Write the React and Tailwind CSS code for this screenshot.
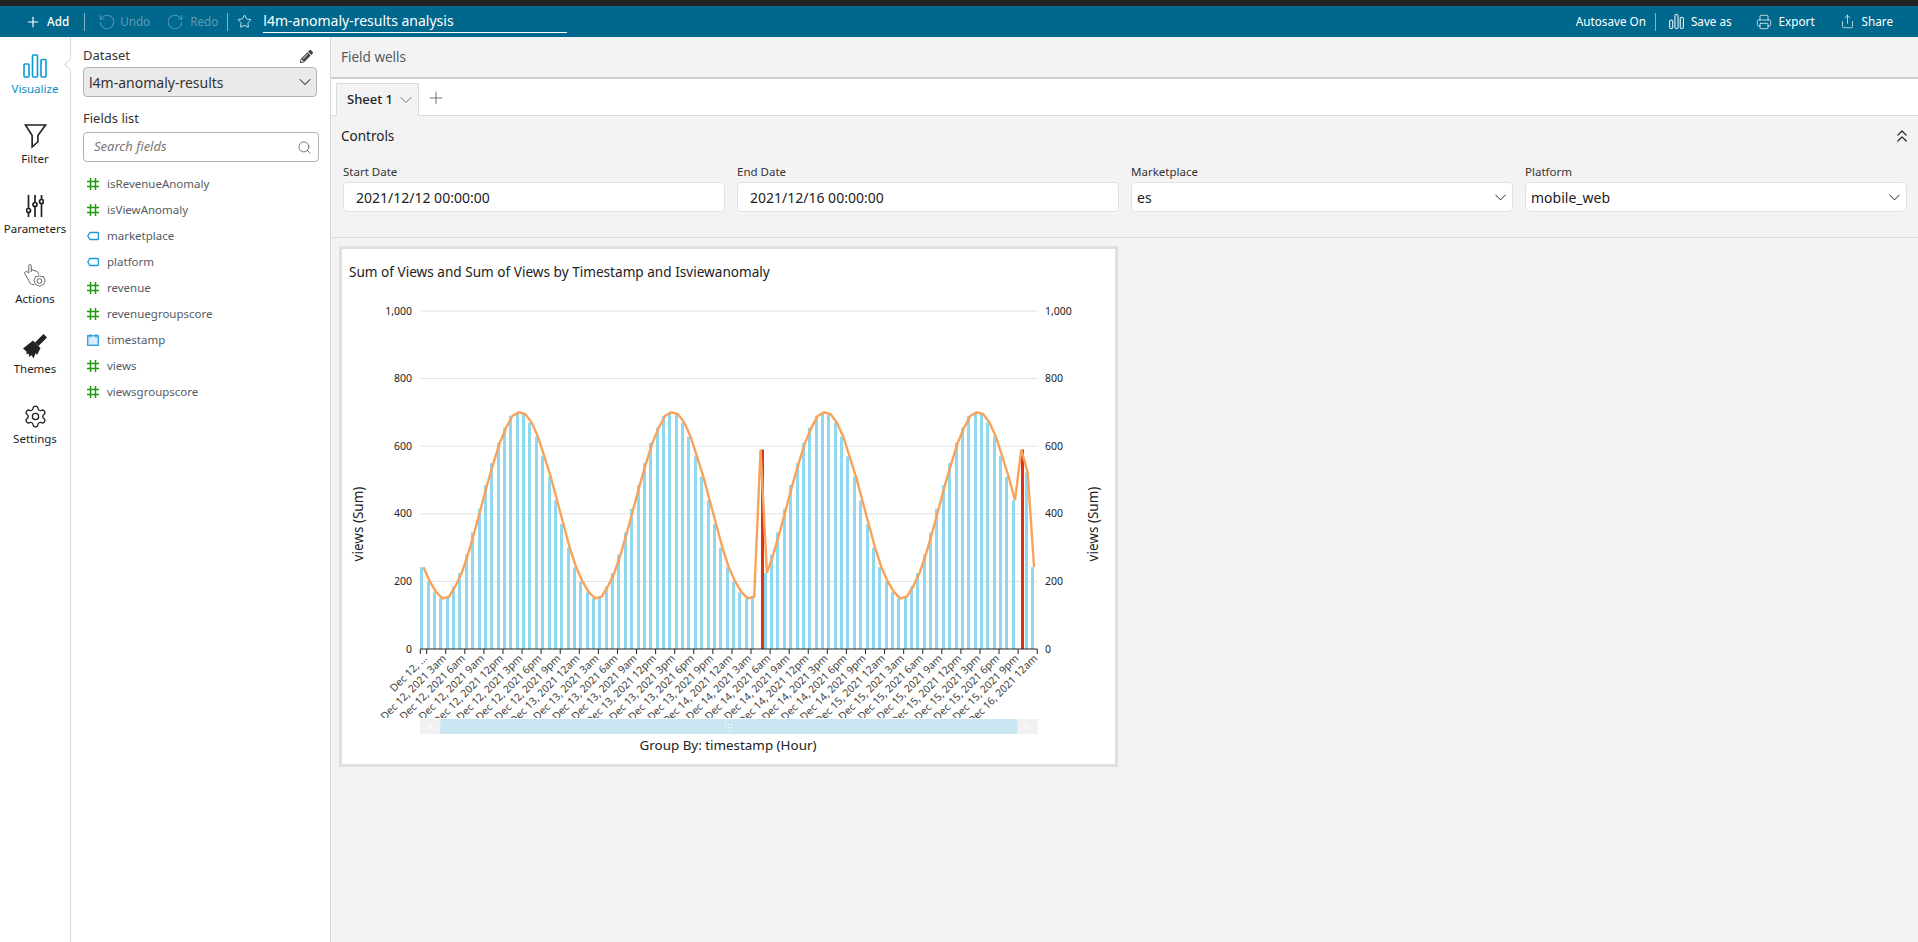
import React from "react";
import { ChevronDown, ChevronsUp, Plus, Printer, RotateCcw, RotateCw, Search, Settings, Share, Star } from "lucide-react";
import { FaPencilAlt } from "react-icons/fa";

const font = { fontFamily: '"Noto Sans", sans-serif' };

const BarsIcon = ({ className }) => (
  <svg viewBox="0 0 24 24" className={className} fill="none" stroke="currentColor" strokeWidth="1.6">
    <rect x="1" y="10" width="5" height="13" rx="1" />
    <rect x="9.5" y="1" width="5" height="22" rx="1" />
    <rect x="18" y="5.5" width="5" height="17.5" rx="1" />
  </svg>
);

const FilterIcon = () => (
  <svg viewBox="0 0 24 26" className="w-[23px] h-[26px]" fill="none" stroke="#222" strokeWidth="1.7">
    <path d="M1.5 1.5H22.5L14.5 12.5V19L8.5 24.5V12.5Z" />
  </svg>
);

const ParamsIcon = () => (
  <svg viewBox="0 0 18 24" className="w-[18px] h-[24px]" fill="none" stroke="#222" strokeWidth="1.7">
    <path d="M2.5 1V14M2.5 19V23M9 1V8M9 13V23M15.5 5V1M15.5 10V23" />
    <circle cx="2.5" cy="16.5" r="2" />
    <circle cx="9" cy="10.5" r="2" />
    <circle cx="15.5" cy="7.5" r="2" />
  </svg>
);

const ActionsIcon = () => (
  <svg viewBox="0 0 24 26" className="w-[24px] h-[26px]" fill="none" stroke="#555" strokeWidth="0.9">
    <path d="M7 1.5C6 1.5 5.8 2.2 5.8 3V10L4.5 9C3.4 8.2 1.5 8.6 1.5 10.2L5.5 17C6 18 6.5 20 8.5 21.5H11M8.3 9V3C8.3 2 7.8 1.5 7 1.5M8.3 6.5L14 8.5C15 9 15.5 10 15.5 11.5" />
    <g stroke="#555" strokeWidth="0.9">
      <circle cx="16.5" cy="18" r="2.4" />
      <path d="M16.5 12.8L18.2 13.6L20.5 13.5L21.2 15.5L22.2 17.2L21.6 19.4L20.5 21.5L18.5 22.4L16.5 23.4L14.5 22.4L12.5 21.5L11.6 19.4L11 17.2L11.8 15.5L12.6 13.5L14.8 13.6Z" />
    </g>
  </svg>
);

const BrushIcon = () => (
  <svg viewBox="0 0 24 25" className="w-[24px] h-[25px]" fill="#222">
    <path d="M20.5 0L24 3.5L15.5 12L12 8.5Z" />
    <path d="M10 6.5L17.5 14L14 21L12.6 19L10.5 24.5L8.5 21L6.5 23L5.5 19.5L3.5 20.5L3.5 17.5L0 14.5Z" />
  </svg>
);

const HashIcon = () => (
  <svg viewBox="0 0 12 12" className="w-[12px] h-[12px]" fill="none" stroke="#1d9c0f" strokeWidth="1.5">
    <path d="M3.5 0V12M8.5 0V12M0 3.5H12M0 8.5H12" />
  </svg>
);

const TagIcon = () => (
  <svg viewBox="0 0 12 12" className="w-[12px] h-[12px]" fill="none" stroke="#1a9ad6" strokeWidth="1.3">
    <path d="M3 2.5H10.3C11 2.5 11.4 3 11.4 3.6V8.4C11.4 9 11 9.5 10.3 9.5H3L0.8 6Z" />
  </svg>
);

const CalendarIcon = () => (
  <svg viewBox="0 0 12 12" className="w-[12px] h-[12px]" fill="none" stroke="#35a4e0" strokeWidth="1.4">
    <rect x="0.7" y="1.7" width="10.6" height="9.6" fill="#d7eefa" />
    <path d="M3 0V3.5M9 0V3.5" />
  </svg>
);

const railItems = [
  { label: "Visualize", icon: <BarsIcon className="w-[24px] h-[24px] text-[#0a9ad6]" />, active: true },
  { label: "Filter", icon: <FilterIcon /> },
  { label: "Parameters", icon: <ParamsIcon /> },
  { label: "Actions", icon: <ActionsIcon /> },
  { label: "Themes", icon: <BrushIcon /> },
  { label: "Settings", icon: <Settings size={25} strokeWidth={1.25} className="text-[#222]" /> },
];

const fields = [
  ["isRevenueAnomaly", "num"],
  ["isViewAnomaly", "num"],
  ["marketplace", "tag"],
  ["platform", "tag"],
  ["revenue", "num"],
  ["revenuegroupscore", "num"],
  ["timestamp", "date"],
  ["views", "num"],
  ["viewsgroupscore", "num"],
];

const controls = [
  { label: "Start Date", value: "2021/12/12 00:00:00" },
  { label: "End Date", value: "2021/12/16 00:00:00" },
  { label: "Marketplace", value: "es", select: true },
  { label: "Platform", value: "mobile_web", select: true },
];

// chart uses page coordinates, see the viewBox on the svg
const X0 = 420.3;
const BAND = 6.36;
const Y0 = 649;
const SCALE = 0.338;
const yOf = (v) => Y0 - v * SCALE;

// one day of hourly views, read off the bars
const day = [242, 200, 168, 150, 155, 185, 225, 280, 345, 415, 485, 550, 610, 655, 690, 700, 695, 670, 628, 570, 510, 440, 370, 300];

const views = Array.from({ length: 97 }, (_, i) => {
  if (i === 53 || i === 94) return 590;
  if (i === 95) return 522;
  return day[i % 24];
});

const linePoints = views.map((v, i) => `${X0 + (i + 0.5) * BAND},${yOf(v)}`).join(" ");

const dayLabels = ["Dec 12", "Dec 13", "Dec 14", "Dec 15", "Dec 16"];
const hourLabels = ["12am", "3am", "6am", "9am", "12pm", "3pm", "6pm", "9pm"];
const ticks = Array.from({ length: 33 }, (_, n) => {
  const label = n === 0 ? "Dec 12, ..." : `${dayLabels[Math.floor(n / 8)]}, 2021 ${hourLabels[n % 8]}`;
  return { x: X0 + BAND + n * 3 * BAND, label };
});

const Chart = () => (
  <svg viewBox="342 290 773 474" className="block w-[773px] h-[474px]" style={font}>
    <defs>
      <clipPath id="label-clip">
        <rect x="342" y="650" width="773" height="68" />
      </clipPath>
    </defs>
    {[0, 200, 400, 600, 800, 1000].map((v) => (
      <g key={v} fontSize="10.5" fill="#222">
        {v > 0 && <line x1={X0} x2={X0 + 617} y1={yOf(v)} y2={yOf(v)} stroke="#e2e2e2" />}
        <text x="412" y={yOf(v) + 3.5} textAnchor="end">{v.toLocaleString("en-US")}</text>
        <text x="1045" y={yOf(v) + 3.5}>{v.toLocaleString("en-US")}</text>
      </g>
    ))}
    {views.map((v, i) =>
      i === 53 || i === 94 ? (
        <rect key={i} x={Math.round(X0 + i * BAND + BAND / 2)} y={yOf(v)} width="3" height={v * SCALE} fill="#e1301a" />
      ) : (
        <rect key={i} x={Math.round(X0 + i * BAND)} y={yOf(v)} width="3" height={v * SCALE} fill="#8fd8ee" />
      )
    )}
    <polyline points={linePoints} fill="none" stroke="#f9a25a" strokeWidth="2.4" />
    <line x1={X0} x2={X0 + 617} y1={Y0} y2={Y0} stroke="#222" />
    <line x1={X0} x2={X0} y1={Y0} y2={Y0 + 5} stroke="#222" />
    {ticks.map((t) => (
      <line key={t.label} x1={t.x} x2={t.x} y1={Y0} y2={Y0 + 5} stroke="#222" />
    ))}
    <g clipPath="url(#label-clip)">
      {ticks.map((t) => (
        <text
          key={t.label}
          transform={`translate(${t.x + 1} ${Y0 + 10}) rotate(-45)`}
          textAnchor="end"
          fontSize="10.5"
          fill="#444"
        >
          {t.label}
        </text>
      ))}
    </g>
    <rect x={X0} y="719" width="617" height="15" fill="#cbe6f3" />
    <rect x={X0} y="719" width="20" height="15" fill="#f1f1f1" />
    <rect x={X0 + 597} y="719" width="20" height="15" fill="#f1f1f1" />
    <path d="M427 725H433M427 728H433M1024 725H1030M1024 728H1030" stroke="#fff" />
    <path d="M725 724.5h1m2 0h1m2 0h1M725 727.5h1m2 0h1m2 0h1M725 730.5h1m2 0h1m2 0h1" stroke="#fff" />
    <text x="363" y="524" transform="rotate(-90 363 524)" textAnchor="middle" fontSize="13.5" fill="#222">views (Sum)</text>
    <text x="1098" y="524" transform="rotate(-90 1098 524)" textAnchor="middle" fontSize="13.5" fill="#222">views (Sum)</text>
    <text x="728" y="750" textAnchor="middle" fontSize="13.4" fill="#222">Group By: timestamp (Hour)</text>
  </svg>
);

export default function App() {
  return (
    <div className="w-full h-[942px] overflow-hidden flex flex-col bg-white text-[#222]" style={font}>
      <div className="h-[6px] bg-[#222222]" />

      {/* top bar */}
      <div className="h-[31px] bg-[#00678d] flex items-center text-white text-[11.7px]">
        <Plus size={16} strokeWidth={1.75} className="ml-[25px]" />
        <span className="ml-[6px] font-medium">Add</span>
        <div className="ml-[15px] w-px h-[18px] bg-[#7fb3c6]" />
        <RotateCcw size={18} strokeWidth={1.5} className="ml-[13px] text-[#4b93ad]" />
        <span className="ml-[4px] text-[#5f9db5]">Undo</span>
        <RotateCw size={18} strokeWidth={1.5} className="ml-[16px] text-[#4b93ad]" />
        <span className="ml-[6px] text-[#5f9db5]">Redo</span>
        <div className="ml-[9px] w-px h-[18px] bg-[#7fb3c6]" />
        <Star size={15} strokeWidth={1.25} className="ml-[9px]" />
        <div className="ml-[11px] w-[304px] h-[22px] border-b border-white text-[14px] leading-[20px]">
          l4m-anomaly-results analysis
        </div>
        <div className="ml-auto flex items-center">
          <span>Autosave On</span>
          <div className="ml-[9px] w-px h-[18px] bg-[#7fb3c6]" />
          <BarsIcon className="ml-[13px] w-[15px] h-[15px]" />
          <span className="ml-[7px]">Save as</span>
          <Printer size={16} strokeWidth={1.1} className="ml-[24px]" />
          <span className="ml-[7px]">Export</span>
          <Share size={15} strokeWidth={1.1} className="ml-[25px]" />
          <span className="ml-[7px] mr-[25px]">Share</span>
        </div>
      </div>

      <div className="flex-1 flex min-h-0">
        {/* left rail */}
        <div className="w-[71px] shrink-0 border-r border-[#d5d9d9] pt-[8px]">
          {railItems.map((item) => (
            <div key={item.label} className="relative h-[70px] flex flex-col items-center pt-[8px]">
              <div className="h-[26px] flex items-center justify-center">{item.icon}</div>
              <span className={`mt-[2px] text-[11.5px] leading-[16px] ${item.active ? "text-[#0a8fc8]" : "text-[#222]"}`}>
                {item.label}
              </span>
              {item.active && (
                <div className="absolute right-[-5px] top-[15px] w-[9px] h-[9px] rotate-45 bg-white border-l border-b border-[#d5d9d9]" />
              )}
            </div>
          ))}
        </div>

        {/* dataset panel */}
        <div className="w-[260px] shrink-0 border-r border-[#d5d9d9] pl-[12px] pr-[11px] pt-[11px]">
          <div className="flex items-center justify-between h-[16px] pr-[6px]">
            <span className="text-[13px] text-[#333]">Dataset</span>
            <FaPencilAlt size={13} className="text-[#444]" />
          </div>
          <div className="mt-[3px] h-[30px] w-[234px] flex items-center justify-between rounded-sm bg-[#eaeaea] border border-[#aab7b8] pl-[5px] pr-[1px] text-[14px] text-[#333]">
            l4m-anomaly-results
            <ChevronDown size={20} strokeWidth={1.25} />
          </div>
          <div className="mt-[13px] text-[13px] leading-[16px] text-[#333]">Fields list</div>
          <div className="mt-[6px] h-[30px] w-[236px] flex items-center justify-between rounded-sm border border-[#aab7b8] pl-[10px] pr-[6px] text-[13px] italic text-[#777]">
            Search fields
            <Search size={15} strokeWidth={1.25} className="text-[#545b64]" />
          </div>
          <div className="mt-[9px] pl-[4px]">
            {fields.map(([name, type]) => (
              <div key={name} className="h-[26px] flex items-center gap-[8px] text-[11.5px] text-[#545b64]">
                {type === "num" && <HashIcon />}
                {type === "tag" && <TagIcon />}
                {type === "date" && <CalendarIcon />}
                {name}
              </div>
            ))}
          </div>
        </div>

        {/* main */}
        <div className="flex-1 min-w-0 flex flex-col bg-[#f3f3f3]">
          <div className="h-[42px] shrink-0 flex items-center pl-[10px] text-[13.5px] text-[#545b64] border-b-2 border-[#d0d0d0]">
            Field wells
          </div>
          <div className="h-[37px] shrink-0 bg-white border-b border-[#dcdcdc] flex items-end pl-[5px]">
            <div className="h-[33px] w-[83px] -mb-px flex items-center justify-between bg-[#f3f3f3] border border-b-0 border-[#dcdcdc] pl-[10px] pr-[2px] text-[13px] font-medium">
              Sheet 1
              <ChevronDown size={20} strokeWidth={1} className="text-[#545b64]" />
            </div>
            <Plus size={20} strokeWidth={1} className="ml-[7px] mb-[7px] text-[#545b64]" />
          </div>
          <div className="h-[122px] shrink-0 border-b border-[#dcdcdc] pl-[12px] pr-[11px]">
            <div className="h-[40px] flex items-center justify-between">
              <span className="-ml-[2px] text-[13.5px]">Controls</span>
              <ChevronsUp size={20} strokeWidth={1.5} className="-mr-[5px]" />
            </div>
            <div className="grid grid-cols-4 gap-x-[12px]">
              {controls.map((c) => (
                <div key={c.label}>
                  <div className="h-[15px] mt-[8px] text-[11.5px] leading-[15px] text-[#333]">{c.label}</div>
                  <div className="mt-[3px] h-[30px] flex items-center justify-between bg-white border border-[#e1e1e1] rounded-sm text-[14px]">
                    <span className={c.select ? "pl-[5px]" : "pl-[12px]"}>{c.value}</span>
                    {c.select && <ChevronDown size={19} strokeWidth={1.25} className="mr-[2px]" />}
                  </div>
                </div>
              ))}
            </div>
          </div>

          {/* visual */}
          <div className="flex-1 pl-[8px] pt-[8px]">
            <div className="w-[779px] h-[521px] bg-white border-[3px] border-[#e0e0e0]">
              <div className="h-[41px] pl-[7px] pt-[5px] flex items-center text-[13.6px] text-[#222]">
                Sum of Views and Sum of Views by Timestamp and Isviewanomaly
              </div>
              <Chart />
            </div>
          </div>
        </div>
      </div>
    </div>
  );
}
